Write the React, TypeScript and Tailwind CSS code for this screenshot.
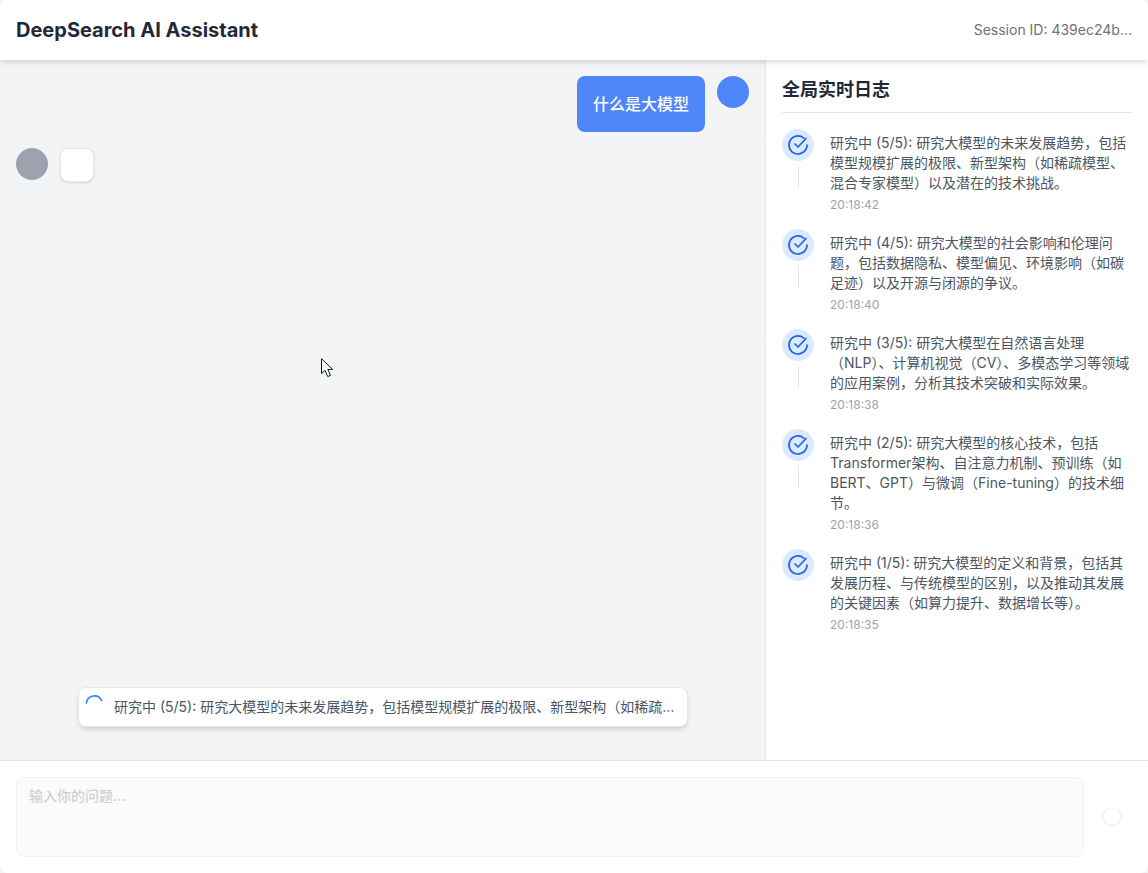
const logs = [
  { t: "研究中 (5/5): 研究大模型的未来发展趋势，包括模型规模扩展的极限、新型架构（如稀疏模型、混合专家模型）以及潜在的技术挑战。", time: "20:18:42", line: true },
  { t: "研究中 (4/5): 研究大模型的社会影响和伦理问题，包括数据隐私、模型偏见、环境影响（如碳足迹）以及开源与闭源的争议。", time: "20:18:40", line: true },
  { t: "研究中 (3/5): 研究大模型在自然语言处理（NLP）、计算机视觉（CV）、多模态学习等领域的应用案例，分析其技术突破和实际效果。", time: "20:18:38", line: true },
  { t: "研究中 (2/5): 研究大模型的核心技术，包括Transformer架构、自注意力机制、预训练（如BERT、GPT）与微调（Fine-tuning）的技术细节。", time: "20:18:36", line: true },
  { t: "研究中 (1/5): 研究大模型的定义和背景，包括其发展历程、与传统模型的区别，以及推动其发展的关键因素（如算力提升、数据增长等）。", time: "20:18:35", line: false },
];

export default function App() {
  return (
    <div className="h-[873px] w-[1148px] bg-[#f3f4f6]">
      <div className="flex h-full w-full flex-col overflow-hidden rounded-lg bg-[#f3f4f6] font-['Inter','Noto_Sans_CJK_SC',sans-serif] text-[#1f2937]">
        <header className="relative z-10 flex h-[60px] shrink-0 items-center justify-between bg-white px-4 shadow-md">
          <h1 className="text-xl font-bold text-[#1f2937]">DeepSearch AI Assistant</h1>
          <span className="text-sm text-[#6b7280]">Session ID: 439ec24b...</span>
        </header>
        <main className="flex h-[700px] shrink-0">
          <section className="relative flex w-[766px] shrink-0 flex-col gap-4 border-r border-[#e5e7eb] p-4">
            <div className="flex justify-end gap-3">
              <div className="flex h-14 items-center rounded-lg bg-[#4f86f7] px-4 text-base font-medium text-white">什么是大模型</div>
              <div className="h-8 w-8 rounded-full bg-[#4f86f7]" />
            </div>
            <div className="flex gap-3">
              <div className="h-8 w-8 rounded-full bg-[#9ca3af]" />
              <div className="h-[34px] w-[34px] rounded-lg border border-[#e5e7eb] bg-white shadow-sm" />
            </div>
            <div className="absolute bottom-[33px] left-[78px] flex h-[40px] w-[610px] items-center gap-2 rounded-lg border border-[#e5e7eb] bg-white pl-[7px] pr-3 shadow-md">
              <svg className="h-5 w-5 shrink-0 -translate-y-1 overflow-visible" viewBox="0 0 20 20" fill="none">
                <path d="M0.4 10A8 8 0 0 1 15.6 7.5" stroke="#3b82f6" strokeWidth="1.75" strokeLinecap="round" />
              </svg>
              <span className="truncate text-sm text-[#4b5563]">研究中 (5/5): 研究大模型的未来发展趋势，包括模型规模扩展的极限、新型架构（如稀疏模型、混合专家模型）以及潜在的技术挑战。</span>
            </div>
            <svg className="absolute left-[321px] top-[298px] h-5 w-[14px]" viewBox="0 0 14 20" fill="none">
              <path d="M.5.7V15.6L4 12.3 6.7 18.6 9.5 17.4 6.8 11.4H11.6Z" fill="#fff" stroke="#111827" strokeWidth="1" />
            </svg>
          </section>
          <aside className="flex-1 bg-white p-4">
            <h2 className="border-b border-[#e5e7eb] pb-2 text-lg font-semibold leading-7 text-[#1f2937]">全局实时日志</h2>
            <ul className="mt-4 flex flex-col">
              {logs.map((l) => (
                <li key={l.time} className="flex gap-4 pb-4">
                  <div className="flex w-8 shrink-0 flex-col items-center">
                    <div className="flex h-8 w-8 items-center justify-center rounded-full bg-[#dbeafe]">
                      <svg className="h-6 w-6" viewBox="0 0 24 24" fill="none" stroke="#2563eb" strokeWidth="1.75" strokeLinecap="round" strokeLinejoin="round">
                        <path d="M21 12a9 9 0 1 1-3.2-6.9" />
                        <path d="M9 11l3 3 8-8.5" />
                      </svg>
                    </div>
                    {l.line && <div className="mt-1 h-6 w-px bg-[#e5e7eb]" />}
                  </div>
                  <div className="min-w-0 flex-1 pt-1">
                    <p className="text-[14px] leading-5 text-[#4b5563]">{l.t}</p>
                    <p className="mt-1 text-xs text-[#9ca3af]">{l.time}</p>
                  </div>
                </li>
              ))}
            </ul>
          </aside>
        </main>
        <footer className="flex flex-1 items-center gap-4 border-t border-[#e5e7eb] bg-white px-4">
          <div className="flex-1 opacity-50">
            <textarea disabled placeholder="输入你的问题..." className="block h-20 w-full resize-none rounded-lg border border-[#e5e7eb] bg-[#f9f9fa] px-3 py-2 text-sm font-medium placeholder:text-[#9ca3af]" />
          </div>
          <div className="flex h-8 w-8 shrink-0 items-center pl-[2px] opacity-50">
            <div className="h-5 w-5 rounded-full border-2 border-[#e5e7eb] border-t-[#f3f4f6]" />
          </div>
        </footer>
      </div>
    </div>
  );
}
